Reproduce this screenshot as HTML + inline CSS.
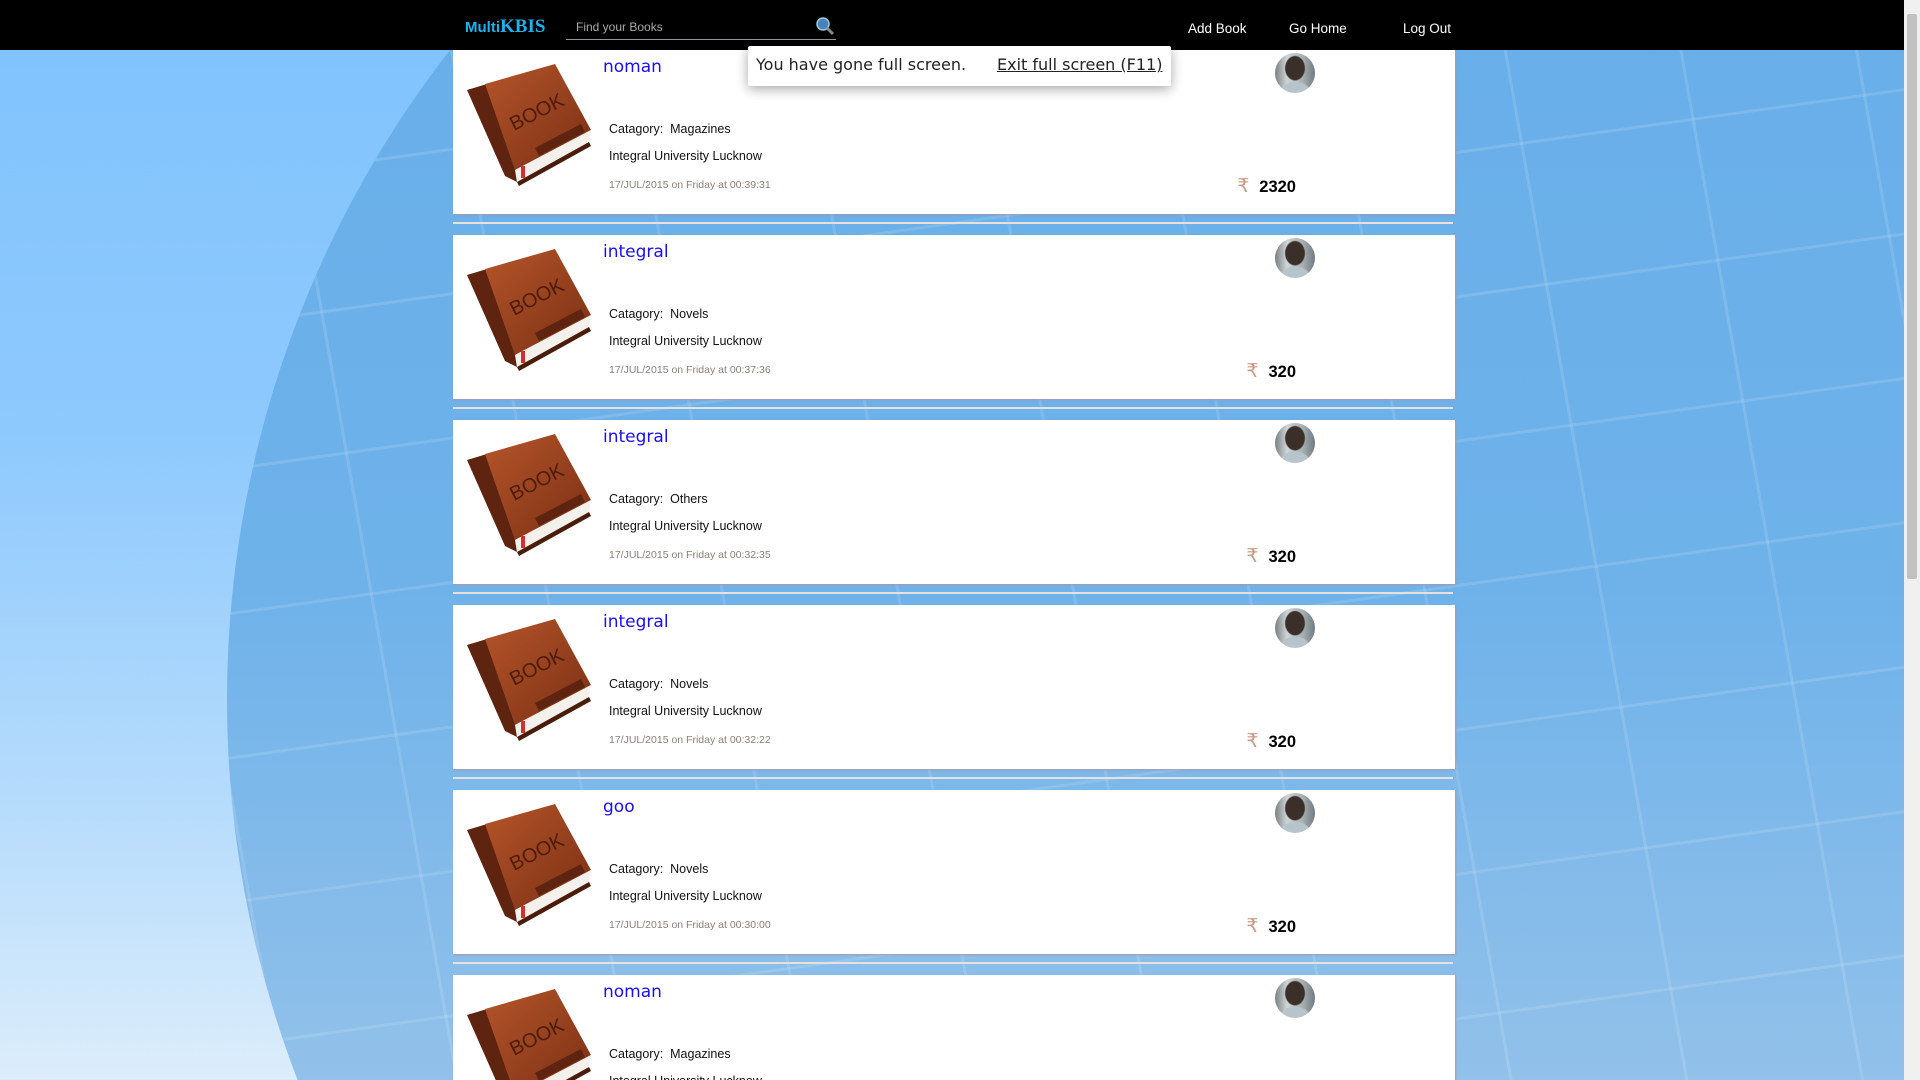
<!DOCTYPE html>
<html><head><meta charset="utf-8">
<style>
*{margin:0;padding:0;box-sizing:border-box}
html,body{width:1920px;height:1080px;overflow:hidden}
body{font-family:"Liberation Sans",sans-serif;background:linear-gradient(#7fc3fd 0%,#8ec9fd 40%,#b7dcfc 75%,#dcedfb 100%);position:relative}
.globe{position:absolute;left:227px;top:-359px;width:2118px;height:2118px;border-radius:50%;
background-image:repeating-linear-gradient(80deg,transparent 0 170px,rgba(255,255,255,.12) 170px 173px),repeating-linear-gradient(-8deg,transparent 0 140px,rgba(255,255,255,.12) 140px 143px),linear-gradient(#64ace8 0%,#6fb2ea 45%,#a4c9ea 80%,#c4d9ec 100%)}
.nav{position:absolute;left:0;top:0;width:1904px;height:50px;background:#000;z-index:5}
.logo{position:absolute;left:465px;top:16px;color:#1ab3ee;font-weight:bold;font-size:15px}
.logo b{font-family:"Liberation Serif",serif;font-size:19px}
.search{position:absolute;left:566px;top:14px;width:270px;height:26px;border-bottom:1px solid #8a9a9a;color:#aaa;font-size:12px;padding:6px 0 0 10px}
.mag{position:absolute;left:815px;top:16px}
.nl{position:absolute;top:21px;color:#fff;font-size:13.5px}
.card{position:absolute;left:453px;width:1002px;height:164px;background:#fff;box-shadow:1px 1px 2px #a999aa;z-index:2}
.sep{position:absolute;left:453px;width:1000px;height:2px;background:#e7e0dc;z-index:2}
.title{position:absolute;left:150px;top:7px;color:#1a0dff;font-size:17px;font-family:"DejaVu Sans",sans-serif}
.cat{position:absolute;left:156px;top:72px;font-size:12.5px;color:#111}
.uni{position:absolute;left:156px;top:99px;font-size:12.5px;color:#111}
.date{position:absolute;left:156px;top:129px;font-size:10.5px;color:#8a7f78}
.av{position:absolute;left:822px;top:3px;width:40px;height:40px;border-radius:50%;background:radial-gradient(ellipse 26% 32% at 50% 38%,#3a3029 0 90%,transparent 100%),radial-gradient(ellipse 40% 30% at 50% 100%,#b8c4cc 0 90%,transparent 100%),linear-gradient(90deg,#7a7f80 0,#d0d6d8 30%,#a6aeb0 70%,#6f7a82 100%);overflow:hidden}
.price{position:absolute;right:159px;top:125px;font-size:16.5px;font-weight:bold;color:#000}
.price span{color:#c99a86;font-weight:normal;margin-right:10px;font-size:19px}
.book{position:absolute;left:12px;top:8px}
.fs{position:absolute;left:748px;top:46px;width:423px;height:40px;background:#fff;border-radius:2px;box-shadow:0 3px 12px rgba(0,0,0,.35);z-index:10;font-family:"DejaVu Sans",sans-serif;font-size:16px;color:#222;padding:9px 0 0 8px;white-space:nowrap}
.fs u{position:absolute;left:249px;top:9px}
.sb{position:absolute;right:0;top:0;width:16px;height:1080px;background:#f0f0f0;z-index:6}
.sb div{position:absolute;left:3px;top:14px;width:10px;height:565px;background:#c1c1c1;border-radius:2px}
</style></head><body>
<div class="globe"></div>
<div class="nav">
<div class="logo">Multi<b>KBIS</b></div>
<div class="search">Find your Books</div>
<svg class="mag" width="20" height="20" viewBox="0 0 20 20"><circle cx="8" cy="8" r="6" fill="#4a7fc0" stroke="#9cc" stroke-width="1.5"/><line x1="12" y1="12" x2="18" y2="18" stroke="#888" stroke-width="3"/></svg>
<div class="nl" style="left:1188px">Add Book</div>
<div class="nl" style="left:1289px">Go Home</div>
<div class="nl" style="left:1403px">Log Out</div>
</div>
<div class="fs">You have gone full screen.<u>Exit full screen (F11)</u></div>
<div class="sb"><div></div></div>

<script>
const d=[["noman","Magazines","00:39:31","2320"],["integral","Novels","00:37:36","320"],["integral","Others","00:32:35","320"],["integral","Novels","00:32:22","320"],["goo","Novels","00:30:00","320"],["noman","Magazines","00:28:10","320"]];
const book='<svg class="book" width="126" height="128" viewBox="0 0 126 128"><defs><linearGradient id="g" x1="0" y1="0" x2="1" y2="1"><stop offset="0" stop-color="#b5552a"/><stop offset="1" stop-color="#7a2f14"/></linearGradient></defs><polygon points="2,32 22,26 50,110 52,124 40,118" fill="#5e240f"/><polygon points="20,26 90,6 126,72 50,112" fill="url(#g)"/><polygon points="50,112 126,72 124,84 52,124" fill="#f4f1ec"/><polygon points="52,124 124,84 126,88 54,128" fill="#4a1c0b"/><polygon points="70,90 116,66 120,74 74,98" fill="#5e2410"/><text x="42" y="66" transform="rotate(-27 60 55)" font-size="20" fill="#4e1c0a" font-family="Liberation Sans">BOOK</text><rect x="56" y="108" width="4" height="12" fill="#d03030"/></svg>';
let h='';
d.forEach((r,i)=>{const t=50+i*185;
h+=`<div class="card" style="top:${t}px">${book}<div class="title">${r[0]}</div><div class="av"></div><div class="cat">Catagory:&nbsp; ${r[1]}</div><div class="uni">Integral University Lucknow</div><div class="date">17/JUL/2015 on Friday at ${r[2]}</div><div class="price"><span>₹</span>${r[3]}</div></div><div class="sep" style="top:${t+172}px"></div>`;});
document.write(h);
</script>
</body></html>
